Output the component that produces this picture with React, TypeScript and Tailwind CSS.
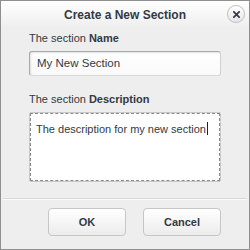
export default function App() {
  return (
    <div className="flex h-[250px] w-[250px] flex-col border border-[#8f8f8f] bg-[#eeeeee] font-['Liberation_Sans',Arial,sans-serif] text-[11px] text-[#333a44]">
      <div className="relative flex h-[27px] shrink-0 items-center justify-center bg-gradient-to-b from-white to-[#eeeeee]">
        <span className="pt-px text-[12px] font-bold text-[#333a44]">Create a New Section</span>
        <button className="absolute right-[4px] top-[4px] flex h-[18px] w-[18px] items-center justify-center rounded-full border border-[#c4c4c4] bg-gradient-to-b from-white to-[#e6e6e6] shadow-[0_0_1px_rgba(0,0,0,0.15)]">
          <svg viewBox="0 0 8 8" className="h-[7px] w-[7px]" aria-hidden="true">
            <path d="M1 1L7 7M7 1L1 7" stroke="#333a44" strokeWidth="2" strokeLinecap="square" />
          </svg>
        </button>
      </div>

      <div className="flex flex-col px-[28px]">
        <div className="mt-[3px] leading-[14px]">
          The section <span className="font-bold">Name</span>
        </div>
        <div className="mt-[6px] flex h-[25px] items-center rounded-[3px] border border-[#a9a9a9] border-b-[#d9d9d9] border-r-[#d0d0d0] bg-gradient-to-b from-white to-[#fafafa] px-[7px] text-[11.5px] shadow-[inset_1px_1px_2px_rgba(0,0,0,0.12)]">
          My New Section
        </div>

        <div className="mt-[16px] leading-[14px]">
          The section <span className="font-bold">Description</span>
        </div>
        <div className="mt-[6px] h-[70px] whitespace-nowrap rounded-[2px] border border-[#c8c8c8] bg-white px-[6px] pt-[7px] text-[11px] leading-[15px] outline-1 outline-offset-[-2px] outline-dashed outline-[#888]">
          The description for my new section
          <span className="ml-px inline-block h-[13px] w-px translate-y-[2px] bg-[#222]" />
        </div>
      </div>

      <div className="mx-[2px] mt-[16px] h-px bg-[#d8d8d8] shadow-[0_1px_0_#fafafa]" />

      <div className="mt-[9px] flex justify-end gap-[17px] px-[28px]">
        <button className="h-[28px] w-[78px] rounded-[4px] border border-[#c6c6c6] bg-gradient-to-b from-white to-[#ececec] font-bold text-[#333a44] shadow-[inset_0_1px_0_#fff]">
          OK
        </button>
        <button className="h-[28px] w-[78px] rounded-[4px] border border-[#c6c6c6] bg-gradient-to-b from-white to-[#ececec] font-bold text-[#333a44] shadow-[inset_0_1px_0_#fff]">
          Cancel
        </button>
      </div>
    </div>
  );
}
